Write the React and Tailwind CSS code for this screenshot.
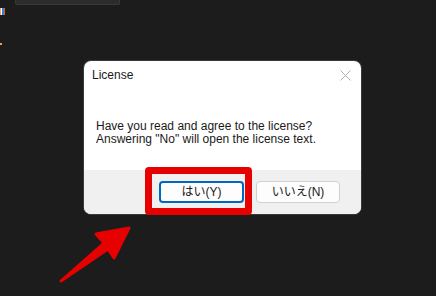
import React from 'react';

export default function App() {
  return (
    <div className="relative w-[436px] h-[296px] overflow-hidden bg-[#1c1c1c] font-['Segoe_UI','Liberation_Sans','Noto_Sans_CJK_JP',sans-serif]">
      {/* Background editor bits */}
      <div className="absolute left-[15px] top-0 w-[105px] h-[5px] bg-[#2c2c2c] border-b border-x border-[#383838] rounded-b-[2px]"></div>
      <div className="absolute left-0 top-[8px] flex h-[7px]">
        <div className="w-[1px] bg-[#f4a261]"></div>
        <div className="w-[1px] bg-[#ffffff]"></div>
        <div className="w-[2px] bg-[#3b7bd6]"></div>
        <div className="w-[1px] bg-[#d2691e]"></div>
      </div>
      <div className="absolute left-0 top-[43px] w-[2px] h-[2px] bg-[#f0a050]"></div>

      {/* Dialog */}
      <div className="pl-[84px] pt-[61px]">
        <div className="w-[277px] h-[153px] bg-white rounded-[7px] flex flex-col shadow-[0_0_0_1px_#3a3a3a]">
          <div className="h-[28px] flex items-center justify-between pl-[8px] pr-[10px]">
            <span className="text-[12px] text-[#1a1a1a]">License</span>
            <svg width="11" height="11" viewBox="0 0 11 11">
              <path d="M0.5 0.5 L10.5 10.5 M10.5 0.5 L0.5 10.5" stroke="#b0b0b0" strokeWidth="1" />
            </svg>
          </div>
          <div className="flex-1 pl-[12px] pt-[31px] text-[12px] leading-[13px] text-[#1a1a1a]">
            <p>Have you read and agree to the license?</p>
            <p>Answering "No" will open the license text.</p>
          </div>
          <div className="h-[44px] bg-[#f0f0f0] rounded-b-[7px] flex justify-end items-start gap-[12px] pt-[11px] pr-[21px]">
            <button className="w-[85px] h-[22px] rounded-[4px] bg-[#fdfdfd] border-2 border-[#0067c0] text-[12px] text-[#1a1a1a] flex items-center justify-center">
              はい(Y)
            </button>
            <button className="w-[84px] h-[22px] rounded-[4px] bg-[#fdfdfd] border border-[#d0d0d0] text-[12px] text-[#1a1a1a] flex items-center justify-center">
              いいえ(N)
            </button>
          </div>
        </div>
      </div>

      {/* Red highlight */}
      <div className="absolute left-[145px] top-[167px] w-[107px] h-[48px] border-[7px] border-[#e60000] rounded-[4px]"></div>

      {/* Red arrow */}
      <svg className="absolute left-0 top-0" width="436" height="296" viewBox="0 0 436 296">
        <polygon
          points="61,281 104,243 96,234 129,228 114,258 108,249"
          fill="#e60000"
          stroke="#e60000"
          strokeWidth="3"
          strokeLinejoin="round"
        />
      </svg>
    </div>
  );
}
